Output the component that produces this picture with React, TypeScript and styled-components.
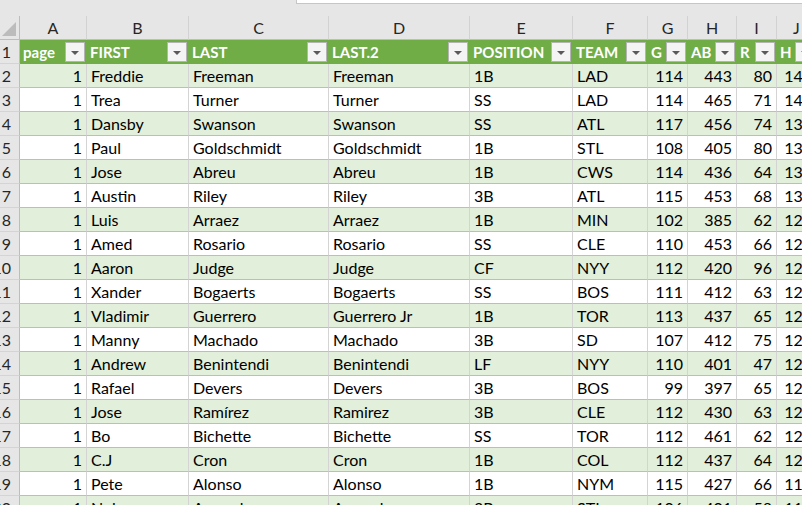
import styled, { createGlobalStyle } from 'styled-components';

const GlobalStyle = createGlobalStyle`
  html, body {
    margin: 0;
    padding: 0;
    background: #ffffff;
  }
  body {
    font-family: Lato, 'Liberation Sans', sans-serif;
  }
`;

const COLS = '20px 67px 102px 140px 141px 103px 75px 40px 49px 40px 40px';

type Align = 'left' | 'right';

const columns: { letter: string; title: string; align: Align }[] = [
  { letter: 'A', title: 'page', align: 'right' },
  { letter: 'B', title: 'FIRST', align: 'left' },
  { letter: 'C', title: 'LAST', align: 'left' },
  { letter: 'D', title: 'LAST.2', align: 'left' },
  { letter: 'E', title: 'POSITION', align: 'left' },
  { letter: 'F', title: 'TEAM', align: 'left' },
  { letter: 'G', title: 'G', align: 'right' },
  { letter: 'H', title: 'AB', align: 'right' },
  { letter: 'I', title: 'R', align: 'right' },
  { letter: 'J', title: 'H', align: 'right' },
];

const players: (string | number)[][] = [
  [1, 'Freddie', 'Freeman', 'Freeman', '1B', 'LAD', 114, 443, 80, 146],
  [1, 'Trea', 'Turner', 'Turner', 'SS', 'LAD', 114, 465, 71, 141],
  [1, 'Dansby', 'Swanson', 'Swanson', 'SS', 'ATL', 117, 456, 74, 131],
  [1, 'Paul', 'Goldschmidt', 'Goldschmidt', '1B', 'STL', 108, 405, 80, 133],
  [1, 'Jose', 'Abreu', 'Abreu', '1B', 'CWS', 114, 436, 64, 135],
  [1, 'Austin', 'Riley', 'Riley', '3B', 'ATL', 115, 453, 68, 132],
  [1, 'Luis', 'Arraez', 'Arraez', '1B', 'MIN', 102, 385, 62, 126],
  [1, 'Amed', 'Rosario', 'Rosario', 'SS', 'CLE', 110, 453, 66, 128],
  [1, 'Aaron', 'Judge', 'Judge', 'CF', 'NYY', 112, 420, 96, 127],
  [1, 'Xander', 'Bogaerts', 'Bogaerts', 'SS', 'BOS', 111, 412, 63, 126],
  [1, 'Vladimir', 'Guerrero', 'Guerrero Jr', '1B', 'TOR', 113, 437, 65, 124],
  [1, 'Manny', 'Machado', 'Machado', '3B', 'SD', 107, 412, 75, 124],
  [1, 'Andrew', 'Benintendi', 'Benintendi', 'LF', 'NYY', 110, 401, 47, 123],
  [1, 'Rafael', 'Devers', 'Devers', '3B', 'BOS', 99, 397, 65, 122],
  [1, 'Jose', 'Ramírez', 'Ramirez', '3B', 'CLE', 112, 430, 63, 121],
  [1, 'Bo', 'Bichette', 'Bichette', 'SS', 'TOR', 112, 461, 62, 120],
  [1, 'C.J', 'Cron', 'Cron', '1B', 'COL', 112, 437, 64, 120],
  [1, 'Pete', 'Alonso', 'Alonso', '1B', 'NYM', 115, 427, 66, 119],
  [1, 'Nolan', 'Arenado', 'Arenado', '3B', 'STL', 106, 401, 58, 119],
];

const Sheet = styled.div`
  width: 802px;
  height: 505px;
  overflow: hidden;
  background: #ffffff;
  color: #000000;
`;

const TopStrip = styled.div`
  height: 16px;
  background: #e6e6e6;
  display: flex;
  justify-content: flex-end;
`;

const FormulaBox = styled.div`
  width: 505px;
  height: 3px;
  background: #ffffff;
  border-left: 1px solid #c6c6c6;
  border-bottom: 1px solid #c6c6c6;
`;

const Row = styled.div`
  display: grid;
  grid-template-columns: ${COLS};
  height: 24px;
`;

const LetterCell = styled.div`
  background: #e6e6e6;
  border-right: 1px solid #d2d2d2;
  border-bottom: 1px solid #bdbdbd;
  display: flex;
  align-items: center;
  justify-content: center;
  font-size: 16px;
  color: #262626;
`;

const Corner = styled.div`
  background: #e6e6e6;
  border-right: 1px solid #bdbdbd;
  border-bottom: 1px solid #bdbdbd;
  display: flex;
  align-items: flex-end;
  justify-content: flex-end;
  padding: 0 3px 3px 0;
`;

const CornerTriangle = styled.div`
  width: 0;
  height: 0;
  border-left: 14px solid transparent;
  border-bottom: 14px solid #bcbcbc;
`;

const RowNumber = styled.div`
  background: #e6e6e6;
  border-right: 1px solid #bdbdbd;
  border-bottom: 1px solid #d4d4d4;
  display: flex;
  align-items: center;
  justify-content: flex-end;
  padding-right: 8px;
  overflow: hidden;
  font-size: 16px;
  color: #262626;
  white-space: nowrap;
`;

const HeadCell = styled.div`
  background: #70ad47;
  color: #ffffff;
  font-weight: 700;
  font-size: 15px;
  display: flex;
  align-items: center;
  justify-content: space-between;
  padding: 0 2px 0 3px;
  overflow: hidden;
  white-space: nowrap;
`;

const FilterButton = styled.div`
  flex: none;
  width: 18px;
  height: 18px;
  margin-left: 2px;
  background: #f4f4f4;
  border: 1px solid #b4b4b4;
  display: flex;
  align-items: center;
  justify-content: center;
`;

const FilterArrow = styled.div`
  width: 0;
  height: 0;
  border-left: 4px solid transparent;
  border-right: 4px solid transparent;
  border-top: 4px solid #5a5a5a;
  margin-top: 1px;
`;

const DataCell = styled.div<{ $align: Align; $band: boolean }>`
  background: ${({ $band }) => ($band ? '#e2efda' : '#ffffff')};
  border-right: 1px solid #d4d4d4;
  border-bottom: 1px solid #a9d08e;
  display: flex;
  align-items: center;
  justify-content: ${({ $align }) => ($align === 'right' ? 'flex-end' : 'flex-start')};
  padding: 0 4px;
  font-size: 16px;
  white-space: nowrap;
  overflow: hidden;
`;

export default function App() {
  return (
    <Sheet>
      <GlobalStyle />
      <TopStrip>
        <FormulaBox />
      </TopStrip>
      <Row>
        <Corner>
          <CornerTriangle />
        </Corner>
        {columns.map((c) => (
          <LetterCell key={c.letter}>{c.letter}</LetterCell>
        ))}
      </Row>
      <Row>
        <RowNumber>1</RowNumber>
        {columns.map((c) => (
          <HeadCell key={c.letter}>
            <span>{c.title}</span>
            <FilterButton>
              <FilterArrow />
            </FilterButton>
          </HeadCell>
        ))}
      </Row>
      {players.map((p, i) => (
        <Row key={i}>
          <RowNumber>{i + 2}</RowNumber>
          {p.map((v, j) => (
            <DataCell key={j} $align={columns[j].align} $band={i % 2 === 0}>
              {v}
            </DataCell>
          ))}
        </Row>
      ))}
    </Sheet>
  );
}
